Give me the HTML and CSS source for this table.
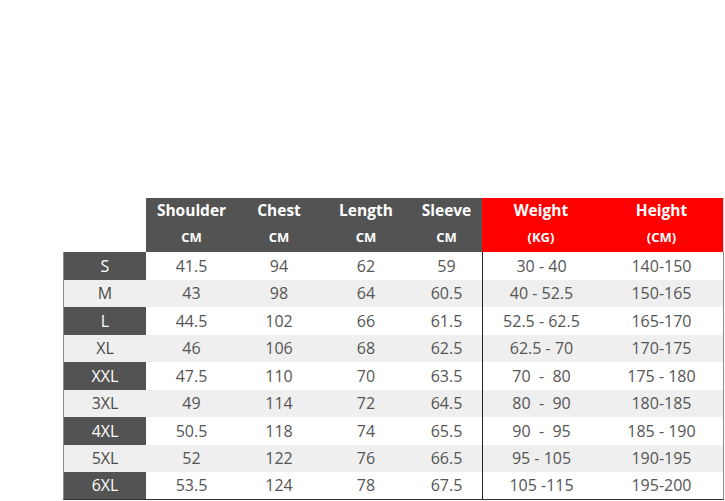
FILE: index.html
```html
<!DOCTYPE html>
<html lang="en">
<head>
<meta charset="utf-8">
<title>Size Chart</title>
<link rel="stylesheet" href="styles.css">
</head>
<body>
<div class="page">
  <div class="chart">
    <div class="corner"></div>
    <div class="hd gray">Shoulder</div>
    <div class="hd gray">Chest</div>
    <div class="hd gray">Length</div>
    <div class="hd gray">Sleeve</div>
    <div class="hd red">Weight</div>
    <div class="hd red edge">Height</div>

    <div class="corner"></div>
    <div class="unit gray">CM</div>
    <div class="unit gray">CM</div>
    <div class="unit gray">CM</div>
    <div class="unit gray">CM</div>
    <div class="unit red">(KG)</div>
    <div class="unit red edge">(CM)</div>

    <div class="lab dark">S</div><div class="c w">41.5</div><div class="c w">94</div><div class="c w">62</div><div class="c w">59</div><div class="c w div">30 - 40</div><div class="c w end">140-150</div>
    <div class="lab light">M</div><div class="c g">43</div><div class="c g">98</div><div class="c g">64</div><div class="c g">60.5</div><div class="c g div">40 - 52.5</div><div class="c g end">150-165</div>
    <div class="lab dark">L</div><div class="c w">44.5</div><div class="c w">102</div><div class="c w">66</div><div class="c w">61.5</div><div class="c w div">52.5 - 62.5</div><div class="c w end">165-170</div>
    <div class="lab light">XL</div><div class="c g">46</div><div class="c g">106</div><div class="c g">68</div><div class="c g">62.5</div><div class="c g div">62.5 - 70</div><div class="c g end">170-175</div>
    <div class="lab dark">XXL</div><div class="c w">47.5</div><div class="c w">110</div><div class="c w">70</div><div class="c w">63.5</div><div class="c w div pre">70  -  80</div><div class="c w end">175 - 180</div>
    <div class="lab light">3XL</div><div class="c g">49</div><div class="c g">114</div><div class="c g">72</div><div class="c g">64.5</div><div class="c g div pre">80  -  90</div><div class="c g end">180-185</div>
    <div class="lab dark">4XL</div><div class="c w">50.5</div><div class="c w">118</div><div class="c w">74</div><div class="c w">65.5</div><div class="c w div pre">90  -  95</div><div class="c w end">185 - 190</div>
    <div class="lab light">5XL</div><div class="c g">52</div><div class="c g">122</div><div class="c g">76</div><div class="c g">66.5</div><div class="c g div">95 - 105</div><div class="c g end">190-195</div>
    <div class="lab dark last">6XL</div><div class="c w last">53.5</div><div class="c w last">124</div><div class="c w last">78</div><div class="c w last">67.5</div><div class="c w div last">105 -115</div><div class="c w end last">195-200</div>
  </div>
</div>
</body>
</html>
```

FILE: styles.css
```css
html, body {
  margin: 0;
  padding: 0;
  background: #ffffff;
}

.page {
  width: 725px;
  height: 501px;
  padding: 198px 0 0 63px;
  box-sizing: border-box;
  overflow: hidden;
}

.chart {
  display: grid;
  grid-template-columns: 83px 91px 84px 90px 71px 118px 124px;
  grid-template-rows: 27px 27px repeat(9, 27.5px);
  font-family: "Open Sans", "Noto Sans", sans-serif;
}

.chart > div {
  display: flex;
  align-items: center;
  justify-content: center;
  box-sizing: border-box;
}

.corner {
  background: #ffffff;
}

.gray {
  background: #535353;
}

.red {
  background: #ff0000;
}

.hd {
  color: #ffffff;
  font-weight: 700;
  font-size: 15.5px;
  padding-bottom: 3px;
}

.unit {
  color: #ffffff;
  font-weight: 700;
  font-size: 13px;
  padding-bottom: 3px;
}

.edge {
  border-right: 1px solid #d0d0d0;
}

.lab {
  font-size: 16px;
  border-left: 1px solid #8a8a8a;
}

.lab.dark {
  background: #535353;
  color: #ffffff;
}

.lab.light {
  background: #efefef;
  color: #4a4a4a;
}

.c {
  font-size: 16px;
  color: #555555;
}

.c.w {
  background: #ffffff;
}

.c.g {
  background: #efefef;
}

.c.div {
  border-left: 1px solid #222222;
}

.c.end {
  border-right: 1px solid #8a8a8a;
}

.pre {
  white-space: pre;
}

.last {
  border-bottom: 1px solid #333333;
}
```
